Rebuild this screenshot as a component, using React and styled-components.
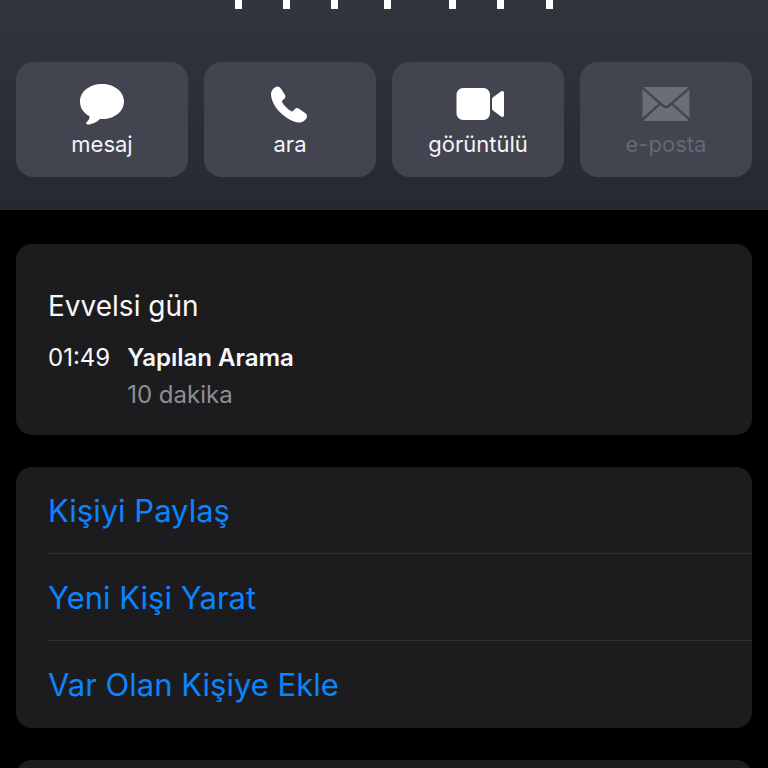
import React from "react";
import styled, { createGlobalStyle } from "styled-components";

const GlobalStyle = createGlobalStyle`
  * { box-sizing: border-box; }
  html { scrollbar-width: none; }
  body {
    margin: 0;
    background: #000;
    color: #f8f8fa;
    font-family: Inter, "Liberation Sans", sans-serif;
  }
  button { font-family: inherit; }
`;

const Page = styled.div`
  height: 100vh;
  overflow-y: auto;
  scrollbar-width: none;
`;

const Header = styled.header`
  display: flex;
  flex-direction: column;
  gap: 53px;
  padding: 0 16px 33px;
  background: linear-gradient(#32353e, #272932);
`;

const NameEdge = styled.svg`
  display: block;
  align-self: center;
  margin-left: 20px;
`;

const Actions = styled.nav`
  display: grid;
  grid-template-columns: repeat(4, 1fr);
  gap: 16px;
`;

const ActionButton = styled.button`
  display: flex;
  flex-direction: column;
  align-items: center;
  gap: 4px;
  padding: 20px 0 18px;
  border: 0;
  border-radius: 18px;
  background: #42444f;
  color: #f4f4f8;
  font-size: 22px;
  line-height: 29px;

  &:disabled {
    color: #666873;
  }
`;

const Icon = styled.svg`
  display: block;
  width: 52px;
  height: 44px;
  fill: #fff;

  ${ActionButton}:disabled & {
    fill: #6b6d78;
  }
`;

const Content = styled.main`
  display: flex;
  flex-direction: column;
  gap: 32px;
  padding: 34px 16px 0;
`;

const Card = styled.section`
  border-radius: 16px;
  background: #1c1c1e;
`;

const CallCard = styled(Card)`
  padding: 43px 32px 22px;
`;

const NextCard = styled(Card)`
  min-height: 86px;
`;

const DayTitle = styled.h2`
  margin: 0 0 14px;
  font-size: 28px;
  font-weight: 400;
  line-height: 38px;
`;

const CallRow = styled.div`
  display: flex;
  gap: 17px;
  font-size: 24px;
  line-height: 37px;
`;

const CallTime = styled.time`
  flex: none;
`;

const CallKind = styled.div`
  font-weight: 600;
`;

const CallLength = styled.div`
  color: #8e8e93;
`;

const ActionList = styled.ul`
  margin: 0;
  padding: 0 0 1px 32px;
  list-style: none;
`;

const ActionItem = styled.li`
  & + & {
    border-top: 1px solid #303032;
  }
`;

const LinkButton = styled.button`
  display: block;
  width: 100%;
  padding: 23px 0 21px;
  border: 0;
  background: none;
  color: #0a84ff;
  font-size: 31px;
  line-height: 42px;
  text-align: left;
`;

const MessageIcon = () => (
  <Icon viewBox="0 0 52 44" aria-hidden="true">
    <path d="M26 2C38.200 2 48 9.600 48 19.500S38.500 37 26.500 37L24 37C21 40 16 42.500 12 42.500C10 42.500 9.600 41 11 39.700C12.600 38 13.800 36.400 13.500 34.200C7.500 31 4 26 4 19.500C4 9.600 13.800 2 26 2Z" />
  </Icon>
);

const PhoneIcon = () => (
  <Icon viewBox="1 0 52 44" aria-hidden="true">
    <path d="M8 12.500C7.900 8.500 11.500 4.600 14.500 4.600C15.900 4.600 17 5.400 18 6.800L21.800 12.400C22.800 14 22.600 15.300 21.500 16.400L19.500 18.400C18.800 19.100 18.900 19.700 19.300 20.400C21.200 23.600 24.900 27.200 28 29.100C28.800 29.600 29.500 29.400 30.100 28.900L31.900 27.100C33.200 25.900 34.500 25.800 36 26.800L41.700 30.800C43.100 31.800 44 32.900 44 34.200C44 37.200 40 40.600 36 40.600C31 40.600 22.500 36 16.500 29.800C11.200 24.300 8.200 17.500 8 12.500Z" />
  </Icon>
);

const VideoIcon = () => (
  <Icon viewBox="0 0 52 44" aria-hidden="true">
    <rect x="4.500" y="6" width="33.500" height="32" rx="6.500" />
    <path d="M40 17.200Q40 16.200 40.800 15.500L48.600 9.800C50.600 8.400 52 9 52 11V33C52 35 50.600 35.600 48.600 34.200L40.800 28.300Q40 27.600 40 26.600Z" />
  </Icon>
);

const MailIcon = () => (
  <Icon viewBox="0 0 52 44" aria-hidden="true">
    <path d="M5.500 5H46.500Q47.600 5 48.300 5.500L28.500 22.600Q26 24.600 23.500 22.600L3.700 5.500Q4.400 5 5.500 5Z" />
    <path d="M2.500 7.500L18.600 21.500L2.500 36Z" />
    <path d="M49.500 7.500L33.400 21.500L49.500 36Z" />
    <path d="M20.300 23L22.400 24.800Q26 27.800 29.600 24.800L31.700 23L48.500 38.200Q47.800 39 46.500 39H5.500Q4.200 39 3.500 38.200Z" />
  </Icon>
);

const quickActions = [
  { label: "mesaj", Drawing: MessageIcon },
  { label: "ara", Drawing: PhoneIcon },
  { label: "görüntülü", Drawing: VideoIcon },
  { label: "e-posta", Drawing: MailIcon, disabled: true },
];

const contactActions = ["Kişiyi Paylaş", "Yeni Kişi Yarat", "Var Olan Kişiye Ekle"];

const stems = [0, 48, 96, 149, 214, 262, 311];

export default function App() {
  return (
    <Page>
      <GlobalStyle />
      <Header>
        <NameEdge width="318" height="9" viewBox="0 0 318 9" fill="#fff" aria-hidden="true">
          {stems.map((x) => (
            <rect key={x} x={x} y="0" width="7" height="9" />
          ))}
        </NameEdge>
        <Actions>
          {quickActions.map(({ label, Drawing, disabled }) => (
            <ActionButton key={label} type="button" disabled={disabled}>
              <Drawing />
              {label}
            </ActionButton>
          ))}
        </Actions>
      </Header>
      <Content>
        <CallCard>
          <DayTitle>Evvelsi gün</DayTitle>
          <CallRow>
            <CallTime dateTime="01:49">01:49</CallTime>
            <div>
              <CallKind>Yapılan Arama</CallKind>
              <CallLength>10 dakika</CallLength>
            </div>
          </CallRow>
        </CallCard>
        <Card>
          <ActionList>
            {contactActions.map((label) => (
              <ActionItem key={label}>
                <LinkButton type="button">{label}</LinkButton>
              </ActionItem>
            ))}
          </ActionList>
        </Card>
        <NextCard />
      </Content>
    </Page>
  );
}
